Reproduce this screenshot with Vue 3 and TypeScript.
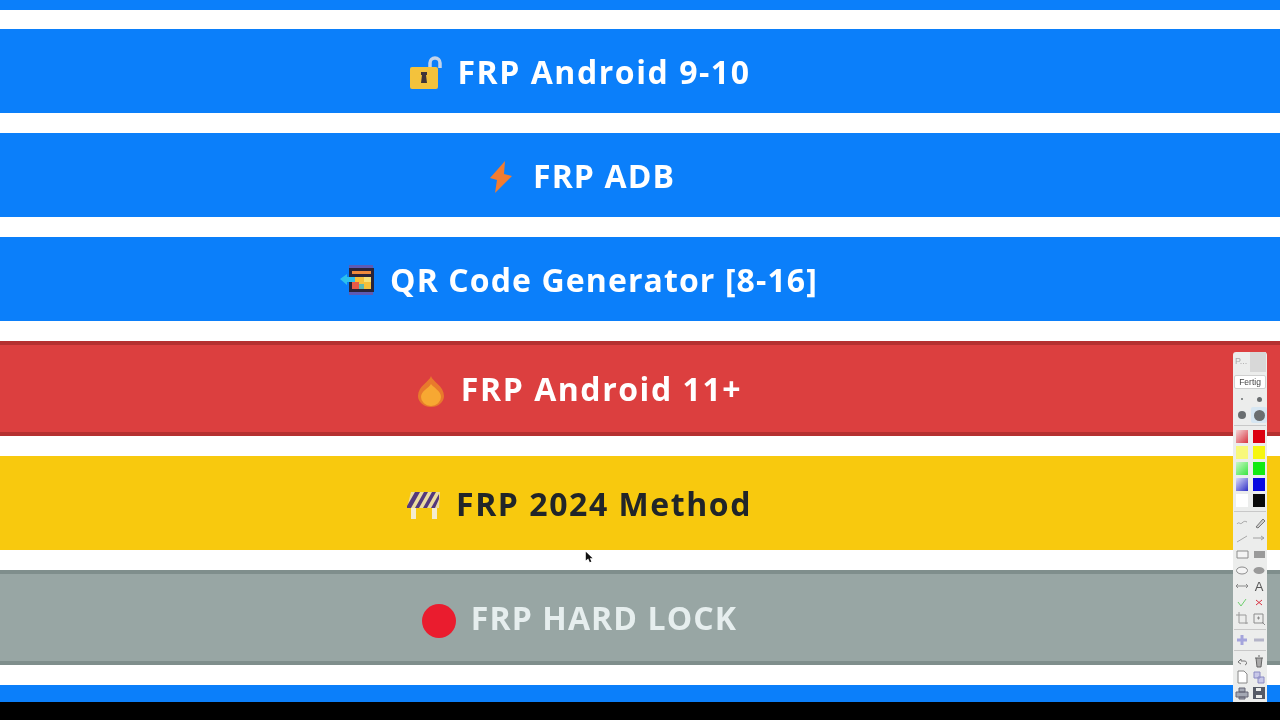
<script setup lang="ts">
interface Row {
  label: string;
  tone: string;
  icon: string;
  wide?: boolean;
}
interface Tool {
  d?: string;
  stroke?: string;
  fill?: string;
  text?: string;
}

const rows: Row[] = [
  { label: "FRP Android 9-10", tone: "blue", icon: "lock", wide: true },
  { label: "FRP ADB", tone: "blue", icon: "bolt" },
  { label: "QR Code Generator [8-16]", tone: "blue", icon: "qr" },
  { label: "FRP Android 11+", tone: "red", icon: "fire", wide: true },
  { label: "FRP 2024 Method", tone: "yellow", icon: "barrier", wide: true },
  { label: "FRP HARD LOCK", tone: "gray", icon: "dot" },
];

const swatches: string[][] = [
  ["linear-gradient(135deg,#f4d6d8,#d9343f)", "#dc0010"],
  ["#f8f87a", "#f6f610"],
  ["linear-gradient(135deg,#c9f7c9,#39e63f)", "#12ea12"],
  ["linear-gradient(135deg,#dcdcf8,#3030c8)", "#0808e0"],
  ["#ffffff", "#0a0a0a"],
];

const toolsA: Tool[] = [
  { d: "M3 10c2-3 3 1 5-1s3-2 5-1", stroke: "#a4a4a4" },
  { d: "M5 13l7-8 2 2-7 7z", stroke: "#777", fill: "#ccc" },
  { d: "M3 12L13 6", stroke: "#a8a8a8" },
  { d: "M2 8h11M10 6l3 2-3 2", stroke: "#a0a0a0" },
  { d: "M3 5h11v7H3z", stroke: "#8c8c8c", fill: "#f4f4f4" },
  { d: "M3 5h11v7H3z", fill: "#9a9a9a" },
  { d: "M2.5 8.5a5.5 3.5 0 1 0 11 0a5.5 3.5 0 1 0-11 0z", stroke: "#8c8c8c", fill: "#f4f4f4" },
  { d: "M2.5 8.5a5.5 3.5 0 1 0 11 0a5.5 3.5 0 1 0-11 0z", fill: "#9a9a9a" },
  { d: "M2 8h12M4 6L2 8l2 2M12 6l2 2-2 2", stroke: "#8a8a8a" },
  { text: "A" },
  { d: "M4 8l3 4 5-7", stroke: "#6fcf6f" },
  { d: "M5 6l6 5M11 6l-6 5", stroke: "#d83040" },
  { d: "M5 2v11h9M2 5h10v9", stroke: "#9a9a9a" },
  { d: "M3 4h9v9H3zM11 12l3 3M6 8h3M7.5 6.5v3", stroke: "#8c8c8c" },
];

const toolsB: Tool[] = [
  { d: "M3 8h10M8 3v10", stroke: "#a4a4dc" },
  { d: "M3 8h10", stroke: "#b4b4c8" },
];

const toolsC: Tool[] = [
  { d: "M4 9l3-3v2h3a2 2 0 0 1 1 4M4 9l3 2", stroke: "#777" },
  { d: "M4 5h8M5 5l1 9h4l1-9M7 3h2", stroke: "#666", fill: "#aaa" },
  { d: "M4 2h6l3 3v9H4z", stroke: "#888", fill: "#fff" },
  { d: "M3 3h6v6H3zM7 8h6v6H7z", stroke: "#8a8ac4", fill: "#c8c8e8" },
  { d: "M5 3h6v4H5zM2 7h12v5H2zM5 12h6v2H5z", stroke: "#667", fill: "#a4a8b4" },
  { d: "M2 2h12v12H2zM5 3v3h5V3zM5 10v3h6v-3z", fill: "#555a66" },
];
</script>

<template>
  <main class="page">
    <div class="band band-edge" />
    <a v-for="row in rows" :key="row.label" class="band row" :class="[row.tone, { wide: row.wide }]" href="#">
      <span class="slot">
        <svg v-if="row.icon === 'lock'" class="ic lock" width="32" height="34" viewBox="0 0 32 34">
          <path d="M20 14V7a5 5 0 0 1 10 0v5" fill="none" stroke="#c3d3ea" stroke-width="3.5" />
          <rect x="0" y="11" width="28" height="22" rx="2" fill="#f3c23c" />
          <path d="M11 16h6v3h-1l1 8h-6l1-8h-1z" fill="#3f3438" />
        </svg>
        <svg v-else-if="row.icon === 'bolt'" class="ic bolt" width="24" height="34" viewBox="0 0 24 34">
          <path d="M16 1L1 18l7 2-2 13L23 16l-8-2z" fill="#f47c30" />
        </svg>
        <svg v-else-if="row.icon === 'qr'" class="ic qr" width="35" height="32" viewBox="0 0 35 32">
          <rect x="9" y="1" width="24" height="30" fill="#7a4f9c" opacity=".75" />
          <rect x="9" y="4" width="25" height="24" fill="#2a2438" />
          <rect x="12" y="7" width="19" height="3" fill="#f08a3c" />
          <rect x="12" y="13" width="19" height="12" fill="#f6c03a" />
          <rect x="12" y="18" width="7" height="7" fill="#e85a48" />
          <rect x="19" y="20" width="5" height="5" fill="#5fb8b0" />
          <rect x="24" y="13" width="7" height="5" fill="#f5e27a" />
          <path d="M0 15l7-5v3h8v5H7v3z" fill="#2bc0ee" />
        </svg>
        <svg v-else-if="row.icon === 'fire'" class="ic fire" width="28" height="32" viewBox="0 0 28 32">
          <path d="M14 1c1 5 13 10 13 20a13 11 0 0 1-26 0C1 11 13 6 14 1z" fill="#e87a2c" />
          <path d="M14 9c2 3 10 7 10 13a10 9 0 0 1-20 0c0-6 8-9 10-13z" fill="#f7a832" />
        </svg>
        <svg v-else-if="row.icon === 'barrier'" class="ic barrier" width="35" height="28" viewBox="0 0 35 28">
          <rect x="5" y="16" width="5" height="12" fill="#f4eccf" />
          <rect x="26" y="16" width="5" height="12" fill="#f4eccf" />
          <path d="M5 1h29l-1 16H1z" fill="#ecdca0" />
          <path d="M1 15L9 1h5L5 17H1zM9 17L18 1h4l-9 16zM17 17L26 1h4l-9 16zM25 17l8-14v5l-4 9z" fill="#54387c" />
        </svg>
        <span v-else class="red-dot" />
      </span>
      <span class="label">{{ row.label }}</span>
    </a>
    <div class="band band-last" />
    <div class="floor" />

    <svg class="cursor" width="8" height="12" viewBox="0 0 10 15">
      <path d="M1 1v11l3-2.5 2 4.5 2-1-2-4h3.5z" fill="#111" />
    </svg>

    <aside class="palette">
      <header class="head">
        <span class="title">P...</span>
        <span class="close" />
      </header>
      <div class="done">Fertig</div>
      <div class="grid sizes">
        <span class="cell"><i class="pt" style="width: 2px; height: 2px" /></span>
        <span class="cell"><i class="pt" style="width: 5px; height: 5px" /></span>
        <span class="cell"><i class="pt" style="width: 8px; height: 8px" /></span>
        <span class="cell active"><i class="pt" style="width: 11px; height: 11px" /></span>
      </div>
      <hr class="rule" />
      <div class="grid">
        <template v-for="(pair, i) in swatches" :key="i">
          <span v-for="c in pair" :key="c" class="cell"><i class="swatch" :style="{ background: c }" /></span>
        </template>
      </div>
      <hr class="rule rule-wide" />
      <div class="grid">
        <span v-for="(t, i) in toolsA" :key="i" class="cell">
          <span v-if="t.text" class="glyph">{{ t.text }}</span>
          <svg v-else width="16" height="16" viewBox="0 0 16 16">
            <path :d="t.d" :stroke="t.stroke || 'none'" :fill="t.fill || 'none'" />
          </svg>
        </span>
      </div>
      <hr class="rule rule-wide" />
      <div class="grid">
        <span v-for="(t, i) in toolsB" :key="i" class="cell">
          <svg width="16" height="16" viewBox="0 0 16 16">
            <path :d="t.d" :stroke="t.stroke" stroke-width="3" fill="none" />
          </svg>
        </span>
      </div>
      <hr class="rule" />
      <div class="grid">
        <span v-for="(t, i) in toolsC" :key="i" class="cell">
          <svg width="16" height="16" viewBox="0 0 16 16">
            <path :d="t.d" :stroke="t.stroke || 'none'" :fill="t.fill || 'none'" fill-rule="evenodd" />
          </svg>
        </span>
      </div>
    </aside>
  </main>
</template>

<style scoped>
.page {
  position: relative;
  width: 1280px;
  height: 720px;
  overflow: hidden;
  display: flex;
  flex-direction: column;
  gap: 20px;
  background: #fff;
  font-family: "Open Sans", "Liberation Sans", sans-serif;
  filter: blur(0.6px);
}
.band {
  flex: none;
  background: #0b7ffa;
}
.band-edge {
  height: 10px;
  margin-bottom: -1px;
}
.band-last {
  height: 17px;
}
.floor {
  flex: none;
  height: 18px;
  margin-top: -20px;
  background: #000;
}
.row {
  height: 84px;
  display: flex;
  align-items: center;
  justify-content: center;
  padding-right: 87px;
  text-decoration: none;
  color: #fff;
  font-size: 32px;
  font-weight: 700;
  letter-spacing: 1.1px;
  white-space: nowrap;
}
.row.wide {
  letter-spacing: 1.55px;
}
.row.red,
.row.yellow,
.row.gray {
  box-sizing: border-box;
  height: 95px;
  border-style: solid;
  border-width: 4px 0;
}
.row.red {
  padding-right: 92px;
  background: #dc3f3f;
  border-color: #b53030;
}
.row.yellow {
  height: 94px;
  background: #f8c90e;
  border-color: #f8c90e;
  color: #212529;
}
.row.gray {
  background: #98a6a4;
  border-color: #7f8e8c;
  color: #e6eeee;
}
.slot {
  width: 0;
  display: flex;
  justify-content: flex-end;
  align-items: center;
  margin-right: 15px;
}
.ic,
.red-dot {
  flex: none;
}
.lock {
  margin-top: 4px;
}
.bolt {
  margin-top: 4px;
  margin-right: 5px;
}
.qr {
  margin-top: 2px;
}
.fire {
  margin-top: 5px;
  margin-right: 1px;
}
.barrier {
  margin-top: 4px;
}
.red-dot {
  width: 34px;
  height: 34px;
  margin-top: 6px;
  border-radius: 50%;
  background: #ea1c2e;
}
.cursor {
  position: absolute;
  left: 585px;
  top: 551px;
}
.palette {
  position: absolute;
  left: 1233px;
  top: 352px;
  width: 34px;
  height: 350px;
  box-sizing: border-box;
  padding: 0 1px;
  display: flex;
  flex-direction: column;
  background: #ecedec;
  border-radius: 3px 3px 0 0;
  font-family: "Liberation Sans", sans-serif;
}
.head {
  height: 20px;
  display: flex;
  align-items: stretch;
  font-size: 9px;
  color: #aaa;
}
.title {
  flex: 1;
  padding: 4px 0 0 1px;
}
.close {
  width: 16px;
  background: #d8d8d8;
}
.done {
  height: 14px;
  margin: 3px 0 0;
  background: #fff;
  border: 1px solid #d0d0d0;
  border-radius: 2px;
  box-sizing: border-box;
  font-size: 8.5px;
  line-height: 12px;
  text-align: center;
  color: #444;
}
.grid {
  display: grid;
  grid-template-columns: 16px 16px;
  column-gap: 1px;
}
.sizes {
  margin-top: 2px;
}
.cell {
  width: 16px;
  height: 16px;
  display: flex;
  align-items: center;
  justify-content: center;
}
.cell.active {
  background: #d6e6f2;
  border-radius: 2px;
}
.pt {
  display: block;
  border-radius: 50%;
  background: #6a6e70;
}
.swatch {
  display: block;
  width: 12px;
  height: 13px;
}
.glyph {
  font-size: 13px;
  line-height: 1;
  color: #555;
}
.rule {
  width: 100%;
  height: 1px;
  margin: 2px 0;
  border: 0;
  background: #c8c8c8;
}
.rule-wide {
  margin: 3px 0 2px;
}
</style>
